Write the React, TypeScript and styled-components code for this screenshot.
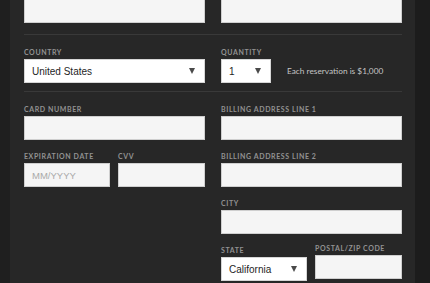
import React from 'react'
import styled, { createGlobalStyle } from 'styled-components'

const GlobalStyle = createGlobalStyle`
  html, body {
    margin: 0;
    padding: 0;
    background: #1d1d1d;
    overflow: hidden;
  }
`

const StyledPage = styled.div`
  display: flex;
  width: 430px;
  height: 283px;
  background: #1c1c1c;
`

const StyledGutter = styled.div<{ $width: number }>`
  width: ${({ $width }) => $width}px;
  flex: ${({ $width }) => ($width ? '0 0 auto' : '1')};
  background: ${({ $width }) => ($width ? '#1f1f1f' : '#1c1c1c')};
`

const StyledPanel = styled.div`
  width: 378px;
  padding: 0 13px 0 14px;
  background: #272727;
  overflow: hidden;
`

const StyledContent = styled.div`
  margin-top: -1px;
`

const StyledSection = styled.div<{ $top: number; $bottom: number; $last?: boolean }>`
  padding: ${({ $top, $bottom }) => `${$top}px 0 ${$bottom}px`};
  border-bottom: ${({ $last }) => ($last ? 'none' : '1px solid #393939')};
`

const StyledColumns = styled.div`
  display: grid;
  grid-template-columns: 181px 181px;
  column-gap: 16px;
  align-items: start;
`

const StyledStack = styled.div`
  display: flex;
  flex-direction: column;
  gap: 10px;
`

const StyledPair = styled.div<{ $cols: string }>`
  display: grid;
  grid-template-columns: ${({ $cols }) => $cols};
  column-gap: 8px;
  align-items: start;
`

const StyledField = styled.div<{ $shift?: number }>`
  display: flex;
  flex-direction: column;
  margin-top: ${({ $shift }) => $shift || 0}px;
`

const StyledLabel = styled.label`
  height: 13px;
  font-family: 'Lato', 'Liberation Sans', sans-serif;
  font-weight: 700;
  font-size: 7px;
  line-height: 13px;
  letter-spacing: 0.6px;
  text-transform: uppercase;
  color: #929292;
  white-space: nowrap;
`

const StyledInput = styled.div<{ $placeholder?: boolean }>`
  box-sizing: border-box;
  height: 24px;
  padding: 0 7px;
  display: flex;
  align-items: center;
  background: #f5f5f5;
  border: 1px solid #cfcfcf;
  font-family: 'Liberation Sans', Arial, sans-serif;
  font-size: 9.5px;
  color: ${({ $placeholder }) => ($placeholder ? '#a9a9a9' : '#222')};
`

const StyledSelect = styled.div<{ $width?: number }>`
  box-sizing: border-box;
  width: ${({ $width }) => ($width ? `${$width}px` : '100%')};
  height: 24px;
  padding: 0 9px 0 7px;
  display: flex;
  align-items: center;
  justify-content: space-between;
  background: #ffffff;
  border: 1px solid #d6d6d6;
  font-family: 'Liberation Sans', Arial, sans-serif;
  font-size: 10px;
  color: #1e1e1e;
`

const StyledCaret = styled.span`
  width: 0;
  height: 0;
  border-left: 3.5px solid transparent;
  border-right: 3.5px solid transparent;
  border-top: 6px solid #4a4a4a;
`

const StyledInline = styled.div`
  display: flex;
  align-items: center;
  gap: 16px;
`

const StyledNote = styled.span`
  font-family: 'Lato', 'Liberation Sans', sans-serif;
  font-size: 8.3px;
  color: #c4c4c4;
  white-space: nowrap;
`

const Select = ({ value, width }: { value: string; width?: number }) => (
  <StyledSelect $width={width}>
    <span>{value}</span>
    <StyledCaret />
  </StyledSelect>
)

const Field = ({
  label,
  children,
  shift,
}: {
  label: string
  children: React.ReactNode
  shift?: number
}) => (
  <StyledField $shift={shift}>
    <StyledLabel>{label}</StyledLabel>
    {children}
  </StyledField>
)

export default function App() {
  return (
    <>
      <GlobalStyle />
      <StyledPage>
        <StyledGutter $width={10} />
        <StyledPanel>
          <StyledContent>
            <StyledSection $top={0} $bottom={11}>
              <StyledColumns>
                <StyledInput />
                <StyledInput />
              </StyledColumns>
            </StyledSection>

            <StyledSection $top={11} $bottom={8}>
              <StyledColumns>
                <Field label="Country">
                  <Select value="United States" />
                </Field>
                <Field label="Quantity">
                  <StyledInline>
                    <Select value="1" width={50} />
                    <StyledNote>Each reservation is $1,000</StyledNote>
                  </StyledInline>
                </Field>
              </StyledColumns>
            </StyledSection>

            <StyledSection $top={11} $bottom={20} $last>
              <StyledColumns>
                <StyledStack>
                  <Field label="Card number">
                    <StyledInput />
                  </Field>
                  <StyledPair $cols="86px 87px">
                    <Field label="Expiration date">
                      <StyledInput $placeholder>MM/YYYY</StyledInput>
                    </Field>
                    <Field label="CVV">
                      <StyledInput />
                    </Field>
                  </StyledPair>
                </StyledStack>
                <StyledStack>
                  <Field label="Billing address line 1">
                    <StyledInput />
                  </Field>
                  <Field label="Billing address line 2">
                    <StyledInput />
                  </Field>
                  <Field label="City">
                    <StyledInput />
                  </Field>
                  <StyledPair $cols="86px 87px">
                    <Field label="State">
                      <Select value="California" />
                    </Field>
                    <Field label="Postal/Zip code" shift={-2}>
                      <StyledInput />
                    </Field>
                  </StyledPair>
                </StyledStack>
              </StyledColumns>
            </StyledSection>
          </StyledContent>
        </StyledPanel>
        <StyledGutter $width={0} />
      </StyledPage>
    </>
  )
}
